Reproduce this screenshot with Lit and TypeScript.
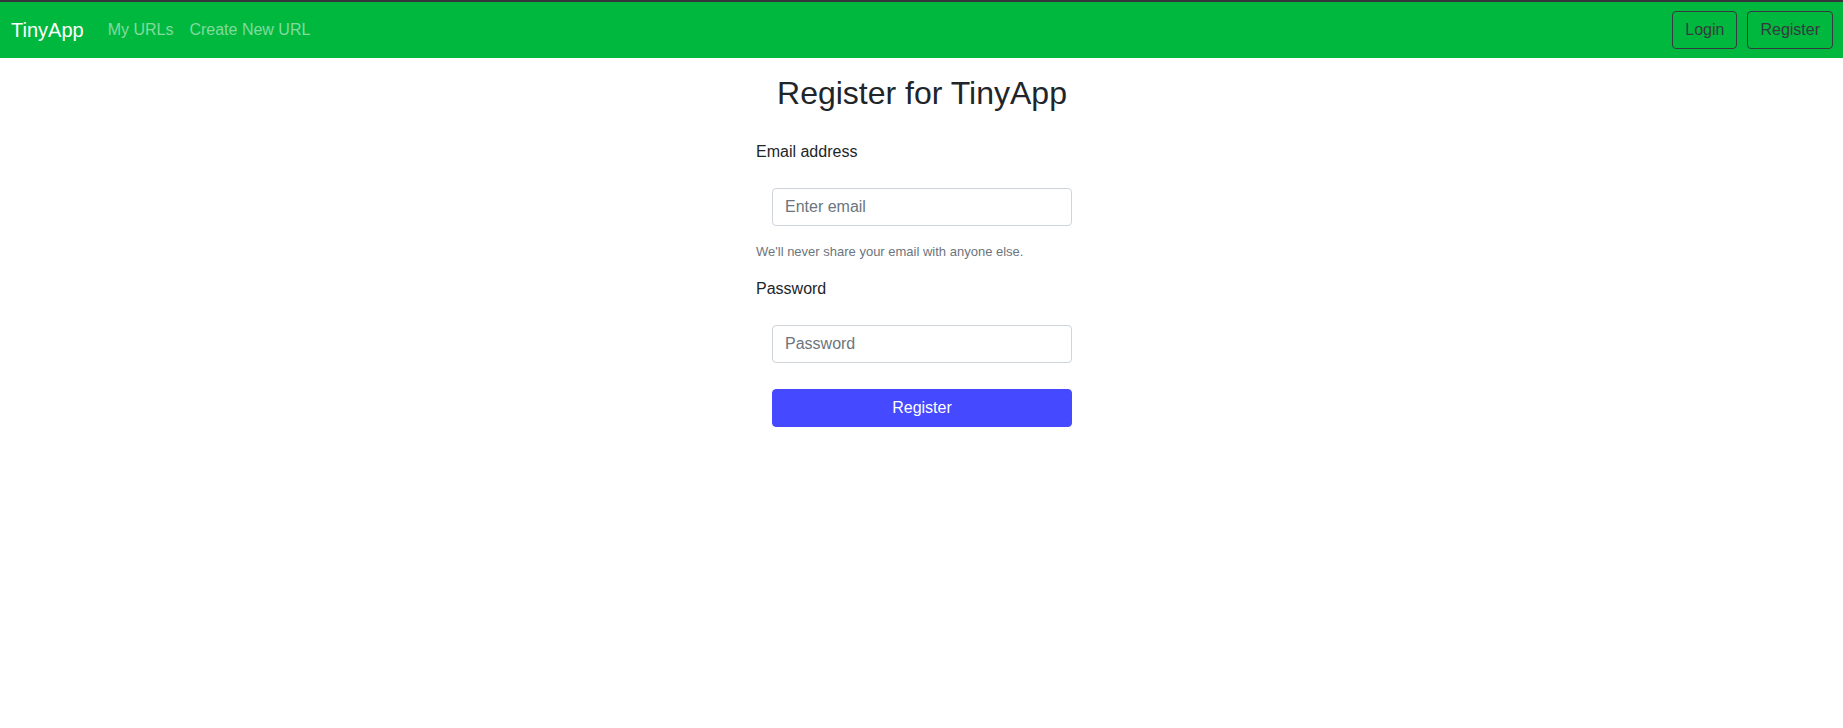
import { LitElement, html, css } from "lit";
import { customElement } from "lit/decorators.js";

@customElement("app-root")
export class AppRoot extends LitElement {
  static styles = css`
    :host {
      display: block;
      min-height: 100vh;
      background: #fff;
      color: #212529;
      font-family: "Liberation Sans", Arial, sans-serif;
      font-size: 16px;
      line-height: 24px;
    }
    *, *::before, *::after { box-sizing: border-box; }
    .navbar {
      display: flex;
      align-items: center;
      justify-content: space-between;
      padding: 8px 10px 8px 11px;
      border-top: 2px solid #37353a;
      background: #00b83d;
    }
    .links { display: flex; align-items: center; }
    .brand {
      margin-right: 16px;
      color: #fff;
      font-size: 20px;
      line-height: 30px;
      text-decoration: none;
    }
    .link {
      padding: 8px;
      color: rgba(255, 255, 255, 0.5);
      text-decoration: none;
    }
    .actions { display: flex; gap: 10px; }
    .btn {
      padding: 6px 12px;
      border: 1px solid transparent;
      border-radius: 4px;
      background: transparent;
      font: inherit;
      cursor: pointer;
    }
    .outline { border-color: #343a40; color: #343a40; }
    .primary {
      width: 300px;
      margin: 10px 16px;
      border-color: #4549ff;
      background: #4549ff;
      color: #fff;
    }
    .content {
      display: flex;
      flex-direction: column;
      align-items: center;
      padding: 16px 0 0 1px;
    }
    .title {
      margin: 0 0 28px;
      font-size: 32px;
      line-height: 38px;
      font-weight: 500;
    }
    .form, .group { display: flex; flex-direction: column; }
    .label { margin-bottom: 8px; }
    .field {
      width: 300px;
      height: 38px;
      margin: 16px;
      padding: 6px 12px;
      border: 1px solid #ced4da;
      border-radius: 4px;
      background: #fff;
      color: #495057;
      font: inherit;
    }
    .field::placeholder { color: #6c757d; opacity: 1; }
    .hint {
      margin-bottom: 16px;
      color: #6c757d;
      font-size: 13px;
      line-height: 19px;
    }
  `;

  render() {
    return html`
      <nav class="navbar">
        <div class="links">
          <a class="brand" href="#">TinyApp</a>
          <a class="link" href="#urls">My URLs</a>
          <a class="link" href="#new">Create New URL</a>
        </div>
        <div class="actions">
          <button class="btn outline" type="button">Login</button>
          <button class="btn outline" type="button">Register</button>
        </div>
      </nav>
      <main class="content">
        <h1 class="title">Register for TinyApp</h1>
        <form class="form">
          <div class="group">
            <label class="label" for="email">Email address</label>
            <input class="field" id="email" type="email" placeholder="Enter email" aria-describedby="hint" />
            <small class="hint" id="hint">We'll never share your email with anyone else.</small>
          </div>
          <div class="group">
            <label class="label" for="password">Password</label>
            <input class="field" id="password" type="password" placeholder="Password" />
          </div>
          <button class="btn primary" type="submit">Register</button>
        </form>
      </main>
    `;
  }
}
